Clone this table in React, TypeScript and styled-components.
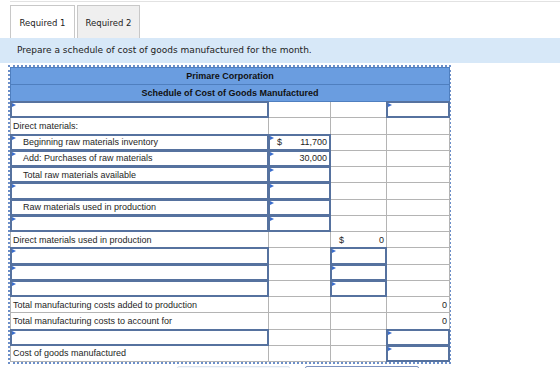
import React from "react";
import styled, { createGlobalStyle, css } from "styled-components";

const GlobalStyle = createGlobalStyle`
  html, body { margin: 0; padding: 0; background: #ffffff; }
  body { font-family: "DejaVu Sans", Verdana, sans-serif; }
`;

const Page = styled.div`
  width: 560px;
  height: 368px;
  overflow: hidden;
  display: flex;
  flex-direction: column;
`;

const TopRule = styled.div`
  margin: 1px 0 0 10px;
  height: 1px;
  flex-shrink: 0;
  background: #e2e2e2;
`;

const TabBar = styled.div`
  display: flex;
  align-items: flex-end;
  gap: 2px;
  padding: 3px 0 0 10px;
  flex-shrink: 0;
`;

const Tab = styled.div<{ $active?: boolean }>`
  box-sizing: border-box;
  height: 33px;
  width: ${(p) => (p.$active ? 65 : 63)}px;
  display: flex;
  align-items: center;
  justify-content: center;
  padding-top: 2px;
  font-size: 8.5px;
  color: #222;
  border: 1px solid #c8c8c8;
  border-bottom: none;
  background: ${(p) => (p.$active ? "#ffffff" : "#efefef")};
`;

const Instruction = styled.div`
  flex-shrink: 0;
  height: 25px;
  line-height: 25px;
  padding-left: 17px;
  background: #d7e8f8;
  font-size: 9px;
  color: #222;
`;

const Frame = styled.div`
  flex-shrink: 0;
  box-sizing: border-box;
  width: 443px;
  margin: 2px 0 0 8px;
  border: 2px dotted #6c8fc9;
`;

const Table = styled.table`
  border-collapse: collapse;
  table-layout: fixed;
  width: 439px;
  font-family: "Liberation Sans", Arial, sans-serif;
  font-size: 9px;
  color: #1e1e1e;
`;

const HeaderCell = styled.td`
  height: 16px;
  padding: 0;
  background: #6a9de0;
  border: 1px solid #4f7fbf;
  text-align: center;
  font-weight: bold;
  color: #111;
`;

const Cell = styled.td`
  height: 15.25px;
  padding: 0;
  border: 1px solid #b4b4b4;
  vertical-align: middle;
`;

const Content = styled.div<{ $input?: boolean; $indent?: boolean; $align?: "left" | "right" }>`
  position: relative;
  box-sizing: border-box;
  height: 15.25px;
  display: flex;
  align-items: center;
  white-space: nowrap;
  justify-content: ${(p) => (p.$align === "right" ? "space-between" : "flex-start")};
  padding: 0 ${(p) => (p.$align === "right" ? "2px" : "0")} 0 ${(p) => (p.$indent ? "12px" : "2px")};
  ${(p) =>
    p.$input &&
    css`
      border: 2px solid #56729f;
      margin: -1px;
      height: 17.25px;
      padding-left: ${p.$indent ? "11px" : "1px"};
    `}
`;

const Marker = styled.span`
  position: absolute;
  top: 0;
  left: 0;
  width: 0;
  height: 0;
  border-left: 4px solid #3a6dcc;
  border-top: 2px solid transparent;
  border-bottom: 2px solid transparent;
`;

const Dollar = styled.span`
  padding-left: 6px;
`;

const Footer = styled.div`
  flex-shrink: 0;
  display: flex;
  margin-top: 2px;
  padding-left: 177px;
  gap: 15px;
`;

const FooterButton = styled.div<{ $primary?: boolean }>`
  box-sizing: border-box;
  height: 20px;
  width: ${(p) => (p.$primary ? 114 : 113)}px;
  border: 1px solid ${(p) => (p.$primary ? "#7d93c0" : "#dbe4ef")};
  border-radius: 2px;
  background: ${(p) => (p.$primary ? "#ffffff" : "#f4f7fb")};
`;

type CellSpec = {
  text?: string;
  input?: boolean;
  marker?: boolean;
  indent?: boolean;
  dollar?: boolean;
  align?: "left" | "right";
};

type RowSpec = [CellSpec, CellSpec, CellSpec, CellSpec];

const E: CellSpec = {};
const IN: CellSpec = { input: true, marker: true };

const rows: RowSpec[] = [
  [IN, E, E, IN],
  [{ text: "Direct materials:" }, E, E, E],
  [
    { text: "Beginning raw materials inventory", input: true, marker: true, indent: true },
    { text: "11,700", dollar: true, input: true, marker: true, align: "right" },
    E,
    E,
  ],
  [
    { text: "Add: Purchases of raw materials", input: true, marker: true, indent: true },
    { text: "30,000", input: true, marker: true, align: "right" },
    E,
    E,
  ],
  [{ text: "Total raw materials available", input: true, indent: true }, IN, E, E],
  [IN, IN, E, E],
  [{ text: "Raw materials used in production", input: true, indent: true }, IN, E, E],
  [IN, IN, E, E],
  [{ text: "Direct materials used in production" }, E, { text: "0", dollar: true, align: "right" }, E],
  [IN, E, IN, E],
  [IN, E, IN, E],
  [IN, E, IN, E],
  [{ text: "Total manufacturing costs added to production" }, E, E, { text: "0", align: "right" }],
  [{ text: "Total manufacturing costs to account for" }, E, E, { text: "0", align: "right" }],
  [IN, E, E, IN],
  [{ text: "Cost of goods manufactured" }, E, E, IN],
];

function SheetCell({ spec }: { spec: CellSpec }) {
  return (
    <Cell>
      <Content $input={spec.input} $indent={spec.indent} $align={spec.align}>
        {spec.marker && <Marker />}
        {spec.align === "right" ? (
          <>
            <Dollar>{spec.dollar ? "$" : ""}</Dollar>
            <span>{spec.text}</span>
          </>
        ) : (
          spec.text
        )}
      </Content>
    </Cell>
  );
}

export default function App() {
  return (
    <>
      <GlobalStyle />
      <Page>
        <TopRule />
        <TabBar>
          <Tab $active>Required 1</Tab>
          <Tab>Required 2</Tab>
        </TabBar>
        <Instruction>Prepare a schedule of cost of goods manufactured for the month.</Instruction>
        <Frame>
          <Table>
            <colgroup>
              <col style={{ width: 258 }} />
              <col style={{ width: 62 }} />
              <col style={{ width: 56 }} />
              <col style={{ width: 63 }} />
            </colgroup>
            <tbody>
              <tr>
                <HeaderCell colSpan={4}>Primare Corporation</HeaderCell>
              </tr>
              <tr>
                <HeaderCell colSpan={4}>Schedule of Cost of Goods Manufactured</HeaderCell>
              </tr>
              {rows.map((r, i) => (
                <tr key={i}>
                  {r.map((c, j) => (
                    <SheetCell key={j} spec={c} />
                  ))}
                </tr>
              ))}
            </tbody>
          </Table>
        </Frame>
        <Footer>
          <FooterButton />
          <FooterButton $primary />
        </Footer>
      </Page>
    </>
  );
}
